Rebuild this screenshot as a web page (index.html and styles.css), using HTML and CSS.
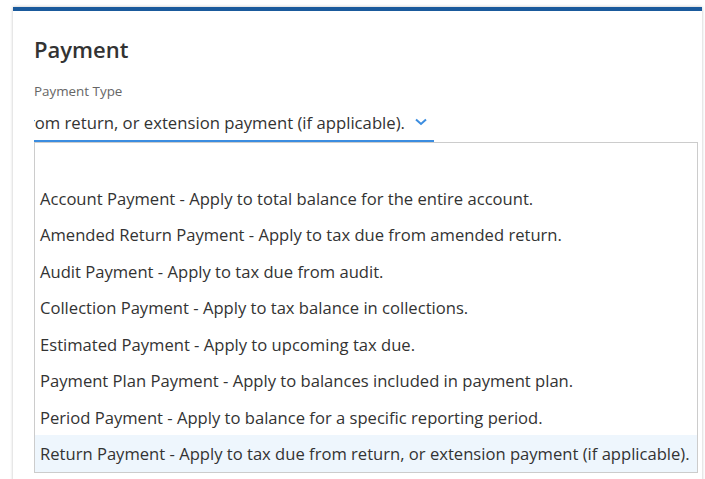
FILE: index.html
```html
<!DOCTYPE html>
<html>
<head>
<meta charset="utf-8">
<link rel="stylesheet" href="styles.css">
</head>
<body>
<div class="card">
  <h2 class="title">Payment</h2>
  <div class="field">
    <label class="label">Payment Type</label>
    <div class="select">
      <div class="select-value"><span>Return Payment - Apply to tax due from return, or extension payment (if applicable).</span></div>
      <svg class="chevron" width="12" height="8" viewBox="0 0 12 8"><path d="M1 1.5 L6 6 L11 1.5" fill="none" stroke="#3b8de0" stroke-width="2"/></svg>
    </div>
    <ul class="listbox">
      <li class="option empty">&nbsp;</li>
      <li class="option">Account Payment - Apply to total balance for the entire account.</li>
      <li class="option">Amended Return Payment - Apply to tax due from amended return.</li>
      <li class="option">Audit Payment - Apply to tax due from audit.</li>
      <li class="option">Collection Payment - Apply to tax balance in collections.</li>
      <li class="option">Estimated Payment - Apply to upcoming tax due.</li>
      <li class="option">Payment Plan Payment - Apply to balances included in payment plan.</li>
      <li class="option">Period Payment - Apply to balance for a specific reporting period.</li>
      <li class="option selected">Return Payment - Apply to tax due from return, or extension payment (if applicable).</li>
    </ul>
  </div>
</div>
</body>
</html>
```

FILE: styles.css
```css
html, body {
  margin: 0;
  padding: 0;
  background: #ffffff;
  overflow: hidden;
}
html {
  height: 479px;
}
body {
  padding: 7px 3px 0 13px;
  font-family: "Open Sans", "Noto Sans", sans-serif;
  color: #333333;
  height: 479px;
  box-sizing: border-box;
}
.card {
  border-top: 4px solid #1a5a9c;
  background: #ffffff;
  box-shadow: 0 0 3px rgba(0, 0, 0, 0.25);
  height: 478px;
  padding: 23px 5px 0 21px;
  box-sizing: border-box;
}
.title {
  margin: 0;
  font-size: 22px;
  font-weight: 600;
  line-height: 30px;
  color: #333333;
}
.field {
  position: relative;
  margin-top: 18px;
}
.label {
  display: block;
  font-size: 13.4px;
  line-height: 18px;
  color: #666666;
}
.select {
  width: 400px;
  height: 38px;
  display: flex;
  align-items: center;
  border-bottom: 2px solid #3b8de0;
  box-sizing: border-box;
  margin-top: 4px;
}
.select-value {
  flex: 1;
  overflow: hidden;
  display: flex;
  justify-content: flex-end;
  white-space: nowrap;
  font-size: 16.7px;
  padding-right: 10px;
}
.chevron {
  margin-right: 7px;
  flex: none;
}
.listbox {
  position: absolute;
  left: 0;
  top: 60px;
  width: 664px;
  margin: 0;
  padding: 0;
  list-style: none;
  border: 1px solid #cccccc;
  box-sizing: border-box;
  background: #ffffff;
}
.option {
  height: 36.5px;
  line-height: 37.5px;
  padding-left: 5px;
  font-size: 16.6px;
  white-space: nowrap;
  color: #333333;
}
.option.selected {
  background: #eef6fd;
}
```
